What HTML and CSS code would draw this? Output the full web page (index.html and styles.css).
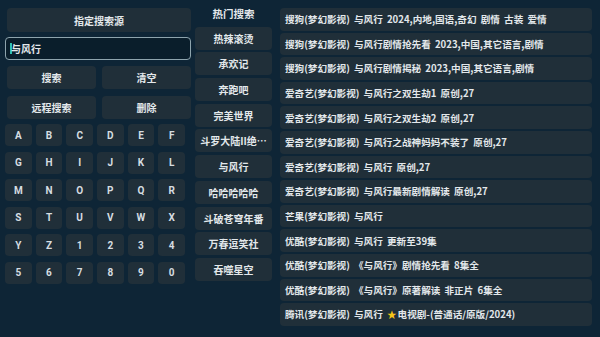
FILE: index.html
```html
<!DOCTYPE html>
<html lang="zh">
<head>
<meta charset="utf-8">
<link rel="stylesheet" href="styles.css">
</head>
<body>
<div class="app">
  <div class="left">
    <div class="btn wide">指定搜索源</div>
    <div class="input"><span class="cursor"></span><span class="val">与风行</span></div>
    <div class="pair">
      <div class="btn">搜索</div>
      <div class="btn">清空</div>
    </div>
    <div class="pair">
      <div class="btn">远程搜索</div>
      <div class="btn">删除</div>
    </div>
    <div class="keys">
      <div class="key">A</div><div class="key">B</div><div class="key">C</div><div class="key">D</div><div class="key">E</div><div class="key">F</div>
      <div class="key">G</div><div class="key">H</div><div class="key">I</div><div class="key">J</div><div class="key">K</div><div class="key">L</div>
      <div class="key">M</div><div class="key">N</div><div class="key">O</div><div class="key">P</div><div class="key">Q</div><div class="key">R</div>
      <div class="key">S</div><div class="key">T</div><div class="key">U</div><div class="key">V</div><div class="key">W</div><div class="key">X</div>
      <div class="key">Y</div><div class="key">Z</div><div class="key">1</div><div class="key">2</div><div class="key">3</div><div class="key">4</div>
      <div class="key">5</div><div class="key">6</div><div class="key">7</div><div class="key">8</div><div class="key">9</div><div class="key">0</div>
    </div>
  </div>
  <div class="hot">
    <div class="hot-title">热门搜索</div>
    <div class="hbtn">热辣滚烫</div>
    <div class="hbtn">承欢记</div>
    <div class="hbtn">奔跑吧</div>
    <div class="hbtn">完美世界</div>
    <div class="hbtn">斗罗大陆II绝…</div>
    <div class="hbtn">与风行</div>
    <div class="hbtn">哈哈哈哈哈</div>
    <div class="hbtn">斗破苍穹年番</div>
    <div class="hbtn">万春逗笑社</div>
    <div class="hbtn">吞噬星空</div>
  </div>
  <div class="results">
    <div class="row">搜狗(梦幻影视) 与风行 2024,内地,国语,奇幻 剧情 古装 爱情</div>
    <div class="row">搜狗(梦幻影视) 与风行剧情抢先看 2023,中国,其它语言,剧情</div>
    <div class="row">搜狗(梦幻影视) 与风行剧情揭秘 2023,中国,其它语言,剧情</div>
    <div class="row">爱奇艺(梦幻影视) 与风行之双生劫1 原创,27</div>
    <div class="row">爱奇艺(梦幻影视) 与风行之双生劫2 原创,27</div>
    <div class="row">爱奇艺(梦幻影视) 与风行之战神妈妈不装了 原创,27</div>
    <div class="row">爱奇艺(梦幻影视) 与风行 原创,27</div>
    <div class="row">爱奇艺(梦幻影视) 与风行最新剧情解读 原创,27</div>
    <div class="row">芒果(梦幻影视) 与风行</div>
    <div class="row">优酷(梦幻影视) 与风行 更新至39集</div>
    <div class="row">优酷(梦幻影视) 《与风行》剧情抢先看 8集全</div>
    <div class="row">优酷(梦幻影视) 《与风行》原著解读 非正片 6集全</div>
    <div class="row">腾讯(梦幻影视) 与风行 <span class="star">★</span>电视剧-(普通话/原版/2024)</div>
  </div>
</div>
</body>
</html>
```
FILE: styles.css
```css
* { box-sizing: border-box; }
html, body {
  margin: 0;
  padding: 0;
  width: 600px;
  height: 337px;
  overflow: hidden;
  background: #0e2536;
  font-family: "Noto Sans CJK SC", "Noto Sans", sans-serif;
  color: #e3e8eb;
}
.app {
  display: flex;
  height: 337px;
}
.left {
  width: 186px;
  margin-left: 5px;
  padding-top: 8px;
  display: flex;
  flex-direction: column;
}
.btn {
  background: #202f39;
  border-radius: 4px;
  height: 23px;
  display: flex;
  align-items: center;
  justify-content: center;
  font-size: 10px;
  font-weight: bold;
}
.wide {
  margin-left: 2px;
  height: 24px;
}
.input {
  margin-top: 5px;
  height: 23px;
  border: 1px solid #8ea4ad;
  border-radius: 4px;
  background: #0a1e2b;
  display: flex;
  align-items: center;
  padding-left: 4px;
  font-size: 10px;
  font-weight: bold;
}
.cursor {
  width: 2px;
  height: 11px;
  background: #2fc2b3;
  margin-right: -1px;
}
.pair {
  margin-top: 6px;
  margin-left: 2px;
  display: grid;
  grid-template-columns: 1fr 1fr;
  column-gap: 6px;
}
.pair + .pair { margin-top: 7px; }
.keys {
  margin-top: 5px;
  width: 180px;
  display: grid;
  grid-template-columns: repeat(6, 1fr);
  column-gap: 4px;
  row-gap: 5.6px;
}
.key {
  height: 22px;
  background: #202f39;
  border-radius: 4px;
  display: flex;
  align-items: center;
  justify-content: center;
  font-family: "Roboto", "Noto Sans", sans-serif;
  font-size: 10px;
  font-weight: bold;
  color: #d6dde1;
}
.hot {
  width: 77px;
  margin-left: 4px;
  display: flex;
  flex-direction: column;
  gap: 2.7px;
}
.hot-title {
  height: 24px;
  padding-top: 3px;
  display: flex;
  align-items: center;
  justify-content: center;
  font-size: 10.5px;
  font-weight: bold;
}
.hbtn {
  height: 23px;
  background: #202f39;
  border-radius: 4px;
  display: flex;
  align-items: center;
  justify-content: center;
  font-size: 10px;
  font-weight: bold;
  white-space: nowrap;
  overflow: hidden;
}
.results {
  width: 312px;
  margin-left: 8px;
  padding-top: 8px;
  display: flex;
  flex-direction: column;
  gap: 2px;
}
.row {
  height: 22.6px;
  background: #202f39;
  border-radius: 4px;
  display: flex;
  align-items: center;
  padding-left: 5px;
  font-size: 9.6px;
  font-weight: bold;
  word-spacing: 2px;
  white-space: pre;
}
.star {
  color: #f5c518;
  margin-right: 1px;
}
```
